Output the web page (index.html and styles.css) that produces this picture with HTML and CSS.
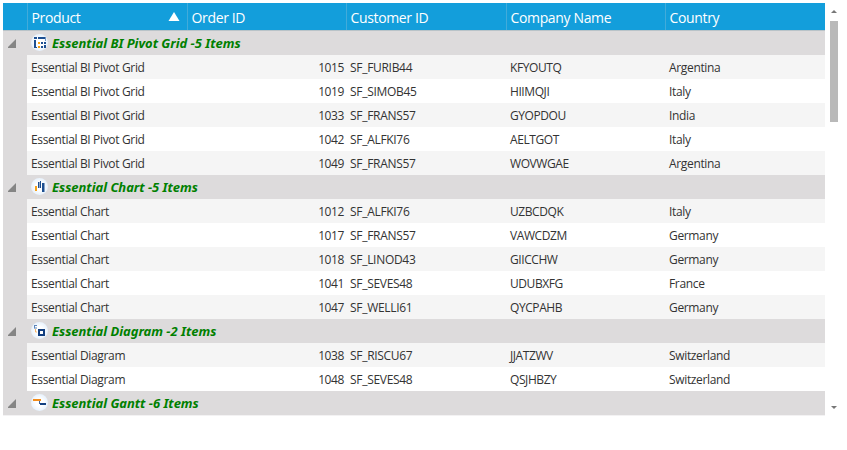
FILE: index.html
```
<!DOCTYPE html>
<html lang="en">
<head>
<meta charset="utf-8">
<title>Products</title>
<link rel="stylesheet" href="styles.css">
</head>
<body>
<div class="viewer">
<div class="grid">
  <div class="row head"><i></i><b>Product<svg class="sort" width="12" height="9" viewBox="0 0 12 9"><path d="M6 0L11.5 9H.5z" fill="#fff"/></svg></b><b>Order ID</b><b>Customer ID</b><b>Company Name</b><b>Country</b></div>

  <div class="group"><svg class="toggle" width="9" height="9" viewBox="0 0 9 9"><path d="M8 0V9H0V8z"/></svg><span class="badge"><svg width="17" height="17" viewBox="0 0 17 17"><path d="M3 3h3v2H3zM7 3h7v2H7zM3 6h2v8H3zM5 13h1v1H5z" fill="#1d4f91"/><path d="M14 3h1v4h-1z" fill="#6f93c2"/><path d="M10 8h2v2h-2zM13 8h2v2h-2zM13 11h2v3h-2zM10 12h2v2h-2z" fill="#1d4f91"/><path d="M7 8h2v2H7zM7 12h2v2H7z" fill="#f5a11a"/></svg></span><span class="title">Essential BI Pivot Grid -5 Items</span></div>
  <div class="row"><i></i><span>Essential BI Pivot Grid</span><span class="num">1015</span><span>SF_FURIB44</span><span>KFYOUTQ</span><span>Argentina</span></div>
  <div class="row alt"><i></i><span>Essential BI Pivot Grid</span><span class="num">1019</span><span>SF_SIMOB45</span><span>HIIMQJI</span><span>Italy</span></div>
  <div class="row"><i></i><span>Essential BI Pivot Grid</span><span class="num">1033</span><span>SF_FRANS57</span><span>GYOPDOU</span><span>India</span></div>
  <div class="row alt"><i></i><span>Essential BI Pivot Grid</span><span class="num">1042</span><span>SF_ALFKI76</span><span>AELTGOT</span><span>Italy</span></div>
  <div class="row"><i></i><span>Essential BI Pivot Grid</span><span class="num">1049</span><span>SF_FRANS57</span><span>WOVWGAE</span><span>Argentina</span></div>

  <div class="group"><svg class="toggle" width="9" height="9" viewBox="0 0 9 9"><path d="M8 0V9H0V8z"/></svg><span class="badge"><svg width="17" height="17" viewBox="0 0 17 17"><path d="M4 8h2v5H4z" fill="#f5a11a"/><path d="M7 4h1.5v6H7zM9 3h1v7H9zM11 5h2.5v9H11z" fill="#1d4f91"/></svg></span><span class="title">Essential Chart -5 Items</span></div>
  <div class="row"><i></i><span>Essential Chart</span><span class="num">1012</span><span>SF_ALFKI76</span><span>UZBCDQK</span><span>Italy</span></div>
  <div class="row alt"><i></i><span>Essential Chart</span><span class="num">1017</span><span>SF_FRANS57</span><span>VAWCDZM</span><span>Germany</span></div>
  <div class="row"><i></i><span>Essential Chart</span><span class="num">1018</span><span>SF_LINOD43</span><span>GIICCHW</span><span>Germany</span></div>
  <div class="row alt"><i></i><span>Essential Chart</span><span class="num">1041</span><span>SF_SEVES48</span><span>UDUBXFG</span><span>France</span></div>
  <div class="row"><i></i><span>Essential Chart</span><span class="num">1047</span><span>SF_WELLI61</span><span>QYCPAHB</span><span>Germany</span></div>

  <div class="group"><svg class="toggle" width="9" height="9" viewBox="0 0 9 9"><path d="M8 0V9H0V8z"/></svg><span class="badge"><svg width="17" height="17" viewBox="0 0 17 17"><path d="M6 3.5H3.5M3.5 6H6" fill="none" stroke="#5f86ba"/><path d="M4.5 7v3H6" fill="none" stroke="#f5b56a"/><path d="M3.5 3v3.500" stroke="#5f86ba"/><path d="M8 8h5v5H8z" fill="#fff" stroke="#123f80" stroke-width="2"/></svg></span><span class="title">Essential Diagram -2 Items</span></div>
  <div class="row"><i></i><span>Essential Diagram</span><span class="num">1038</span><span>SF_RISCU67</span><span>JJATZWV</span><span>Switzerland</span></div>
  <div class="row alt"><i></i><span>Essential Diagram</span><span class="num">1048</span><span>SF_SEVES48</span><span>QSJHBZY</span><span>Switzerland</span></div>

  <div class="group"><svg class="toggle" width="9" height="9" viewBox="0 0 9 9"><path d="M8 0V9H0V8z"/></svg><span class="badge"><svg width="17" height="17" viewBox="0 0 17 17"><path d="M2 6h8" stroke="#f28c1b" stroke-width="2"/><path d="M8.500 7v3" stroke="#3c649c"/><path d="M9 10h6" stroke="#123f80" stroke-width="2"/></svg></span><span class="title">Essential Gantt -6 Items</span></div>
</div>
<div class="scroll">
  <svg width="6" height="3" viewBox="0 0 6 3"><path d="M3 0L6 3H0z" fill="#777"/></svg>
  <div class="track"><div class="thumb"></div></div>
  <svg width="6" height="3" viewBox="0 0 6 3"><path d="M3 3L6 0H0z" fill="#777"/></svg>
</div>
</div>
</body>
</html>
```
FILE: styles.css
```
body { margin: 0; background: #fff; font-family: "Open Sans", "Noto Sans", sans-serif; color: #333; }
.viewer { display: flex; padding: 3px 0 0 3px; }
.grid { width: 822px; border-bottom: 1px solid #f3f2f3; }
.row { display: grid; grid-template-columns: 24px 160px 159px 160px 159px 160px; height: 24px; background: #f5f5f5; font-size: 12px; line-height: 25px; letter-spacing: -0.42px; white-space: nowrap; }
.row.alt { background: #fff; }
.row i { background: #dddbdc; }
.row span { padding: 0 2px 0 4px; }
.row span:nth-child(2) { letter-spacing: -0.34px; }
.row span:nth-child(4) { letter-spacing: -0.3px; }
.row span:nth-child(6) { letter-spacing: -0.34px; }
.row .num { text-align: right; letter-spacing: -0.4px; }
.row.head { height: 27px; background: #139edb; border-bottom: 1px solid #b9c3c8; color: #fff; font-size: 14px; line-height: 30px; letter-spacing: -0.35px; }
.head i { background: none; }
.head b { height: 27px; box-sizing: border-box; font-weight: 400; padding: 0 7px 0 4px; border-left: 1px solid #42abda; margin-left: -0.5px; display: flex; justify-content: space-between; }
.sort { margin-top: 9px; }
.group { display: flex; align-items: center; height: 24px; background: #dddbdc; }
.toggle { margin: 0 0 0 5px; fill: #858585; }
.badge { display: flex; width: 17px; height: 17px; margin-left: 14px; margin-top: -1px; border-radius: 50%; background: radial-gradient(circle, #fff 30%, #d6e8fa 100%); }
.title { margin-left: 4px; color: #008000; font-family: "Noto Sans", "Open Sans", sans-serif; font-size: 13px; font-weight: 700; font-style: italic; line-height: 24px; letter-spacing: -0.03px; white-space: nowrap; }
.scroll { display: flex; flex-direction: column; align-items: center; width: 8px; height: 399px; margin-left: 5px; padding-top: 7px; }
.track { width: 8px; flex: 1; padding-top: 8px; }
.thumb { height: 101px; background: #b9b9b9; }
```
